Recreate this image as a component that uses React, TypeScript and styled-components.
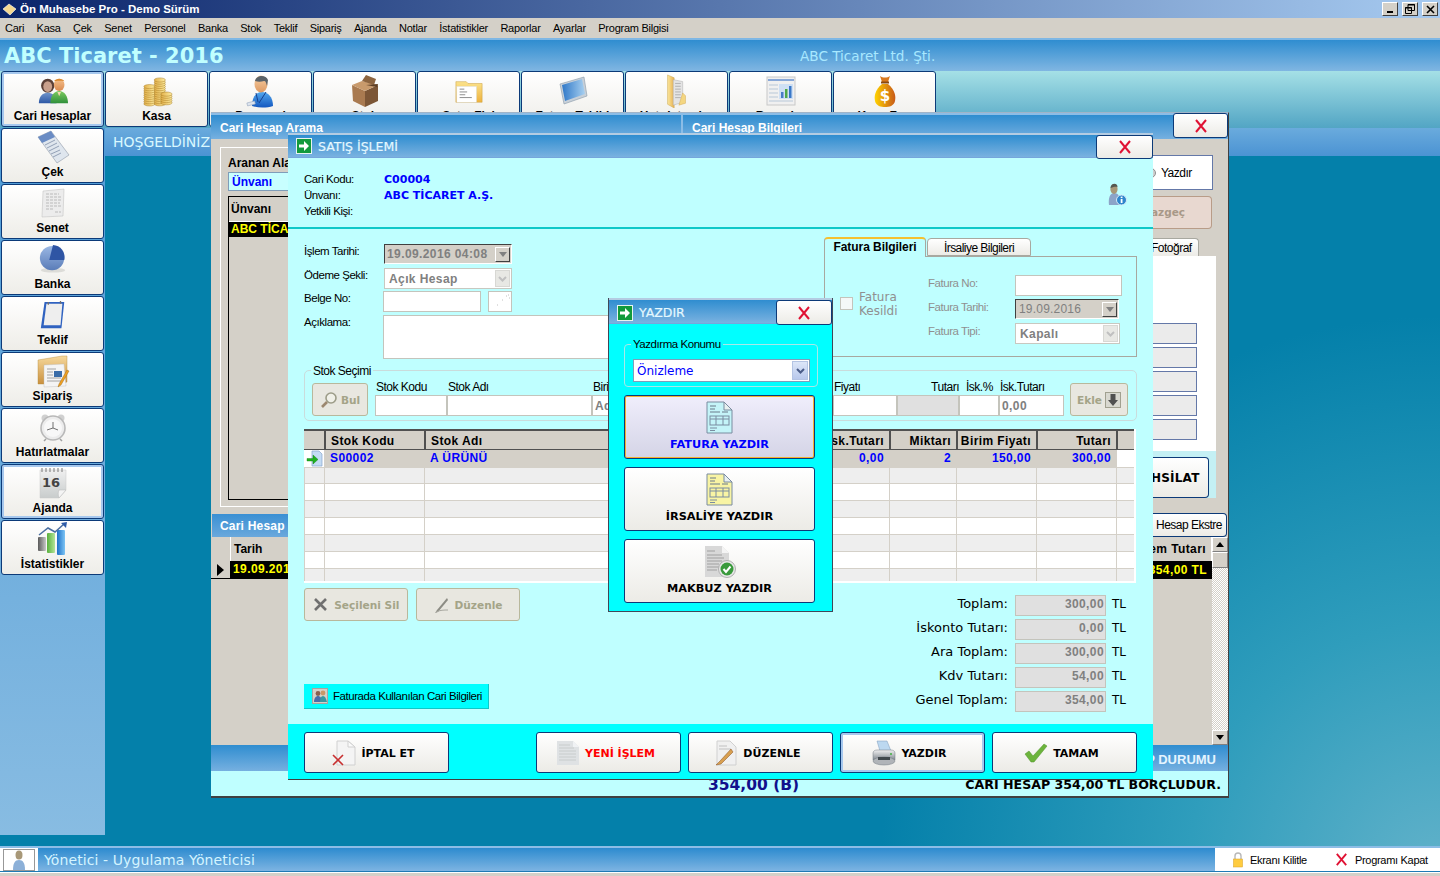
import React from "react";
import styled, { createGlobalStyle, css } from "styled-components";

const ui = `"Liberation Sans", Arial, sans-serif`;
const wide = `"DejaVu Sans", Verdana, sans-serif`;
const boldData = css`
  font: bold 12px ${ui};
  letter-spacing: 0.4px;
`;

const Global = createGlobalStyle`
  html, body { margin: 0; padding: 0; background: #0480aa; }
  * { box-sizing: border-box; }
`;

const Root = styled.div`
  position: relative;
  width: 1440px;
  height: 876px;
  overflow: hidden;
  display: flex;
  flex-direction: column;
  font-family: ${ui};
  font-size: 11px;
  color: #000;
  background: radial-gradient(circle 560px at 100% 100%, #62b2ca 0%, #2f9dbc 45%, #0480aa 100%), #0480aa;
`;

/* ---------- application chrome ---------- */
const TitleBar = styled.div`
  height: 18px;
  display: flex;
  align-items: center;
  gap: 3px;
  padding: 0 2px 0 2px;
  background: linear-gradient(90deg, #0a246a 0%, #a6caf0 100%);
  color: #fff;
  font: bold 11.5px ${ui};
`;
const TitleText = styled.span`
  flex: 1;
  white-space: nowrap;
`;
const WinButton = styled.div`
  width: 16px;
  height: 14px;
  background: #d4d0c8;
  border: 1px solid;
  border-color: #fff #404040 #404040 #fff;
  display: flex;
  align-items: center;
  justify-content: center;
  margin-left: 1px;
`;
const MenuBar = styled.div`
  height: 20px;
  display: flex;
  align-items: center;
  gap: 12.4px;
  padding-left: 5px;
  background: #d4d0c8;
  font: 11px ${ui};
  letter-spacing: -0.25px;
  white-space: nowrap;
`;
const Header = styled.div`
  height: 33px;
  flex: none;
  display: flex;
  align-items: center;
  border-top: 2px solid #7fb7e4;
  padding-left: 4px;
  background: linear-gradient(180deg, #2f8dd0 0%, #80b6e2 100%);
`;
const Brand = styled.div`
  width: 796px;
  font: bold 21px ${wide};
  color: #c0ffff;
  white-space: nowrap;
`;
const Company = styled.div`
  font: 13.6px ${wide};
  color: #a8e8ff;
`;
const TopTools = styled.div`
  height: 57px;
  flex: none;
  display: flex;
  gap: 1px;
  padding-left: 1px;
  background: linear-gradient(180deg, #a5e0e6 0%, #52a5c4 100%);
`;
const ToolButton = styled.div<{ $active?: boolean }>`
  width: 103px;
  height: 56px;
  display: flex;
  flex-direction: column;
  align-items: center;
  justify-content: flex-start;
  background: linear-gradient(180deg, #ffffff 0%, #eeede8 100%);
  border: 1px solid #0c3a78;
  border-radius: 3px;
  box-shadow: ${(p) => (p.$active ? "inset 0 0 0 2px #a6c8ee" : "none")};
  font: bold 12px ${ui};
  white-space: nowrap;
  overflow: hidden;
`;
const ToolIcon = styled.div`
  height: 37px;
  flex: none;
  display: flex;
  align-items: center;
  justify-content: center;
`;
const Workspace = styled.div`
  flex: 1;
  display: flex;
  min-height: 0;
`;
const Sidebar = styled.div`
  width: 105px;
  height: 707px;
  flex: none;
  display: flex;
  flex-direction: column;
  gap: 1px;
  padding-left: 1px;
  background: linear-gradient(180deg, #4f9bd6 0%, #88bce2 100%);
`;
const SideButton = styled(ToolButton)`
  height: 55px;
  ${ToolIcon} {
    height: 36px;
  }
`;
const Stage = styled.div`
  flex: 1;
`;
const Welcome = styled.div`
  height: 28px;
  padding-left: 8px;
  display: flex;
  align-items: center;
  background: linear-gradient(180deg, #6aabdd 0%, #4b93d3 100%);
  color: #d8f8ff;
  font: 14px ${wide};
`;
const StatusBar = styled.div`
  height: 26px;
  flex: none;
  display: flex;
  align-items: stretch;
  border-top: 2px solid #8cbde6;
  border-bottom: 1px solid #1f7ab4;
`;
const StatusAvatar = styled.div`
  width: 38px;
  background: #fff;
  display: flex;
  align-items: center;
  justify-content: center;
`;
const StatusUser = styled.div`
  flex: 1;
  display: flex;
  align-items: center;
  padding-left: 6px;
  background: linear-gradient(180deg, #2d8bcf 0%, #7db4e2 100%);
  color: #d4f4ff;
  font: 14px ${wide};
  letter-spacing: 0.1px;
`;
const StatusActions = styled.div`
  width: 225px;
  background: #fff;
  display: flex;
  align-items: center;
  gap: 27px;
  padding-left: 17px;
  font: 11px ${ui};
  letter-spacing: -0.3px;
`;
const StatusAction = styled.span`
  display: flex;
  align-items: center;
  gap: 6px;
  white-space: nowrap;
`;
const Footer = styled.div`
  height: 4px;
  flex: none;
  background: linear-gradient(180deg, #fff 0 1px, #d4d0c8 1px);
`;

/* ---------- back window ---------- */
const BackWindow = styled.div`
  position: absolute;
  left: 211px;
  top: 112px;
  width: 1018px;
  height: 686px;
  display: flex;
  flex-direction: column;
  background: #d4d0c8;
  border-top: 1px solid #a0b4c8;
  border-right: 1px solid #404040;
  border-bottom: 2px solid #404040;
`;
const BackTitle = styled.div`
  height: 26px;
  flex: none;
  display: flex;
  background: linear-gradient(180deg, #2f8dd0 0%, #76b0e0 100%);
  border-top: 2px solid #8cbde6;
  color: #fff;
  font: bold 12px ${ui};
`;
const BackTitleCell = styled.div<{ $w?: number }>`
  width: ${(p) => p.$w ?? 0}px;
  flex: ${(p) => (p.$w ? "none" : 1)};
  padding: 6px 0 0 9px;
  border-right: ${(p) => (p.$w ? "2px solid #8cbde6" : "none")};
  white-space: nowrap;
`;
const CloseButton = styled.div<{ $w: number; $h: number }>`
  position: absolute;
  right: 0;
  top: 0;
  width: ${(p) => p.$w}px;
  height: ${(p) => p.$h}px;
  background: linear-gradient(180deg, #fff 0%, #ecebe6 100%);
  border: 1px solid #0c3a78;
  border-radius: 3px;
  display: flex;
  align-items: center;
  justify-content: center;
`;
const BackBody = styled.div`
  height: 606px;
  flex: none;
  display: flex;
  justify-content: space-between;
`;
const Pane = styled.div`
  width: 77px;
  flex: none;
  overflow: hidden;
  display: flex;
  flex-direction: column;
`;
const SearchFrame = styled.div`
  height: 360px;
  margin: 8px 0 0 9px;
  width: 90px;
  flex: none;
  padding: 8px 0 0 7px;
  border: 1px solid #fff;
  border-right: 0;
`;
const SearchLabel = styled.div`
  font: bold 12px ${ui};
  white-space: nowrap;
  height: 13px;
`;
const SearchField = styled.div`
  margin-top: 3px;
  height: 19px;
  width: 90px;
  background: #c8ffff;
  border: 1px solid #7f9db9;
  padding: 2px 3px;
  font: bold 12px ${ui};
  color: #0000ff;
`;
const SearchList = styled.div`
  margin-top: 5px;
  height: 304px;
  width: 90px;
  border: 1px solid #000;
`;
const SearchHead = styled.div`
  height: 25px;
  padding: 5px 2px;
  font: bold 12px ${ui};
  border-bottom: 1px solid #fff;
`;
const SearchRow = styled.div`
  height: 15px;
  background: #000;
  color: #ff0;
  padding-left: 2px;
  font: bold 12px ${ui};
  white-space: nowrap;
`;
const HistoryBand = styled.div`
  margin: 7px 0 0 1px;
  height: 23px;
  flex: none;
  padding: 5px 0 0 8px;
  background: linear-gradient(180deg, #3a90d4 0%, #6aa8dc 100%);
  color: #fff;
  font: bold 12px ${ui};
  letter-spacing: 0.2px;
  white-space: nowrap;
  overflow: hidden;
`;
const HistoryHead = styled.div`
  height: 24px;
  flex: none;
  display: flex;
  align-items: center;
  margin-left: 19px;
  padding-left: 3px;
  border-left: 1px solid #fff;
  font: bold 12px ${ui};
`;
const HistoryRow = styled.div`
  height: 18px;
  flex: none;
  display: flex;
  ${boldData};
`;
const RowMark = styled.div`
  width: 20px;
  flex: none;
  display: flex;
  align-items: center;
  justify-content: center;
  border: 1px solid #000;
  border-width: 0 1px 1px 0;
`;
const BlackCell = styled.div`
  flex: 1;
  background: #000;
  color: #ff0;
  padding-left: 2px;
  white-space: nowrap;
  overflow: hidden;
  line-height: 16px;
`;
const PrintLink = styled.div`
  margin: 16px 15px 0 0;
  height: 35px;
  flex: none;
  background: #fff;
  border: 1px solid #6478a8;
  border-left: 0;
  display: flex;
  align-items: center;
  gap: 4px;
  font: 12px ${ui};
  letter-spacing: -0.5px;
`;
const CancelButton = styled.div`
  margin: 6px 16px 0 0;
  height: 33px;
  flex: none;
  padding-top: 9px;
  background: #e8d8d0;
  border: 1px solid #b89c88;
  border-left: 0;
  border-radius: 0 4px 4px 0;
  font: bold 10.5px ${wide};
  color: #a89888;
`;
const PhotoTab = styled.div`
  margin-top: 9px;
  width: 48px;
  height: 18px;
  flex: none;
  background: linear-gradient(180deg, #fff, #ecebe6);
  border: 1px solid #a8a8a0;
  border-left: 0;
  border-bottom: 0;
  border-radius: 0 4px 0 0;
  font: 12px ${ui};
  letter-spacing: -0.5px;
  padding-top: 2px;
`;
const PhotoPanel = styled.div`
  width: 65px;
  height: 195px;
  flex: none;
  background: #fff;
  padding-top: 67px;
  display: flex;
  flex-direction: column;
  gap: 3px;
`;
const PhotoRow = styled.div`
  width: 46px;
  height: 21px;
  flex: none;
  background: #ebebeb;
  border: 1px solid #6478a8;
  border-left: 0;
`;
const CollectArea = styled.div`
  width: 65px;
  height: 47px;
  flex: none;
  padding-top: 6px;
  background: #c4f0f4;
`;
const CollectButton = styled.div`
  width: 58px;
  height: 41px;
  display: flex;
  align-items: center;
  background: linear-gradient(180deg, #fff, #ecebe6);
  border: 1px solid #0c3a78;
  border-left: 0;
  border-radius: 0 4px 4px 0;
  font: bold 12px ${wide};
  white-space: nowrap;
  letter-spacing: 0.2px;
`;
const StatementButton = styled.div`
  margin: 15px 0 0 0;
  width: 76px;
  height: 24px;
  flex: none;
  background: linear-gradient(180deg, #fff, #ecebe6);
  border: 1px solid #0c3a78;
  border-left: 0;
  border-radius: 0 4px 4px 0;
  display: flex;
  align-items: center;
  padding-left: 5px;
  font: 12px ${ui};
  letter-spacing: -0.5px;
  white-space: nowrap;
`;
const GridWrap = styled.div`
  flex: 1;
  display: flex;
`;
const AmountCol = styled.div`
  width: 61px;
  flex: none;
`;
const AmountHead = styled.div`
  height: 24px;
  display: flex;
  align-items: center;
  justify-content: flex-end;
  padding-right: 5px;
  border-right: 1px solid #fff;
  ${boldData};
  white-space: nowrap;
  overflow: hidden;
`;
const AmountCell = styled.div`
  height: 18px;
  display: flex;
  align-items: center;
  justify-content: flex-end;
  padding-right: 5px;
  background: #000;
  color: #ff0;
  ${boldData};
  white-space: nowrap;
  overflow: hidden;
`;
const ScrollBar = styled.div`
  width: 16px;
  flex: none;
  display: flex;
  flex-direction: column;
  background: repeating-conic-gradient(#fff 0 25%, #d4d0c8 0 50%) 0 0 / 2px 2px;
`;
const ScrollBtn = styled.div<{ $grow?: boolean }>`
  height: ${(p) => (p.$grow ? 16 : 15)}px;
  background: #d4d0c8;
  border: 1px solid;
  border-color: #fff #808080 #808080 #fff;
  display: flex;
  align-items: center;
  justify-content: center;
  flex: none;
`;
const ScrollTrack = styled.div`
  flex: 1;
`;
const BackBand = styled.div`
  height: 26px;
  flex: none;
  padding: 3px 12px 0 0;
  display: flex;
  align-items: center;
  justify-content: flex-end;
  background: linear-gradient(180deg, #2f8dd0 0%, #76b0e0 100%);
  color: #e4f4ff;
  font: bold 13px ${ui};
`;
const BackFoot = styled.div`
  flex: 1;
  display: flex;
  align-items: center;
  justify-content: space-between;
  padding: 2px 7px 0 497px;
  background: #bfffff;
  font: bold 12.6px ${wide};
`;
const Owed = styled.span`
  color: #10108c;
  font: bold 15.5px ${wide};
`;

/* ---------- sale dialog ---------- */
const SaleDialog = styled.div`
  position: absolute;
  left: 288px;
  top: 133px;
  width: 865px;
  height: 647px;
  display: flex;
  flex-direction: column;
  background: #bfffff;
  border-bottom: 1px solid #404040;
`;
const DialogTitle = styled.div<{ $h: number; $pad?: number }>`
  position: relative;
  height: ${(p) => p.$h}px;
  flex: none;
  display: flex;
  align-items: center;
  gap: 6px;
  padding: ${(p) => p.$pad ?? 0}px 0 0 8px;
  border-top: 2px solid #b4cce2;
  border-bottom: 1px solid #76a6dc;
  background: linear-gradient(180deg, #2f8dd0 0%, #7ab2e0 100%);
  color: #e4f8ff;
  font: 12.5px ${wide};
  -webkit-text-stroke: 0.2px #e4f8ff;
`;
const InfoBlock = styled.div`
  position: relative;
  height: 71px;
  flex: none;
  padding: 13px 16px 0;
  border-bottom: 2px solid #10c8c8;
  display: grid;
  grid-template-columns: 80px 1fr;
  grid-auto-rows: 16px;
  align-items: center;
`;
const CondLabel = styled.span`
  font: 11.5px ${ui};
  letter-spacing: -0.45px;
  white-space: nowrap;
`;
const BlueValue = styled.span`
  font: bold 11px ${wide};
  color: #0000ff;
`;
const InfoIcon = styled.div`
  position: absolute;
  right: 24px;
  top: 24px;
`;
const FormArea = styled.div`
  height: 133px;
  flex: none;
  display: flex;
`;
const FormFields = styled.div`
  width: 536px;
  flex: none;
  padding: 15px 0 0 16px;
  display: flex;
  flex-direction: column;
`;
const FormRow = styled.div<{ $h: number }>`
  display: flex;
  height: ${(p) => p.$h}px;
  flex: none;
  gap: 6px;
`;
const FormLabel = styled(CondLabel)`
  width: 74px;
  padding-top: 1px;
  flex: none;
`;
const DateBox = styled.div<{ $w: number }>`
  width: ${(p) => p.$w}px;
  height: 20px;
  display: flex;
  align-items: center;
  justify-content: space-between;
  padding: 0 1px 0 2px;
  background: #d4d0c8;
  border: 1px solid;
  border-color: #404040 #fff #fff #404040;
  color: #808080;
  ${boldData};
  white-space: nowrap;
`;
const PlainDate = styled.span`
  font: 12px ${ui};
  letter-spacing: 0.2px;
  padding-left: 1px;
`;
const SpinBtn = styled.div`
  width: 15px;
  height: 15px;
  flex: none;
  background: #d4d0c8;
  border: 1px solid;
  border-color: #fff #404040 #404040 #fff;
  display: flex;
  align-items: center;
  justify-content: center;
`;
const ComboBox = styled.div<{ $w: number }>`
  width: ${(p) => p.$w}px;
  height: 21px;
  display: flex;
  align-items: center;
  justify-content: space-between;
  padding: 0 1px 0 4px;
  background: #fff;
  border: 1px solid #c8c8c0;
  color: #808080;
  ${boldData};
`;
const ComboArrow = styled.div`
  width: 15px;
  height: 17px;
  background: #e8e8e4;
  border: 1px solid #d8d8d4;
  display: flex;
  align-items: center;
  justify-content: center;
  flex: none;
`;
const TextBox = styled.div<{ $w: number; $h: number; $fill?: string; $shift?: number }>`
  width: ${(p) => p.$w}px;
  height: ${(p) => p.$h}px;
  flex: none;
  margin-left: ${(p) => p.$shift ?? 0}px;
  background: ${(p) => p.$fill ?? "#fff"};
  border: 1px solid #c4c4bc;
  display: flex;
  align-items: center;
  justify-content: center;
`;
const TabsArea = styled.div`
  flex: none;
  padding-top: 8px;
  width: 313px;
`;
const TabStrip = styled.div`
  height: 19px;
  display: flex;
  align-items: flex-end;
  gap: 1px;
`;
const Tab = styled.div<{ $active?: boolean }>`
  width: ${(p) => (p.$active ? 102 : 104)}px;
  height: ${(p) => (p.$active ? 20 : 18)}px;
  margin-bottom: ${(p) => (p.$active ? -1 : 0)}px;
  position: relative;
  text-align: center;
  padding-top: ${(p) => (p.$active ? 1 : 2)}px;
  border: 1px solid #a8a8a0;
  border-bottom: ${(p) => (p.$active ? "0" : "1px solid #a8a8a0")};
  border-top: ${(p) => (p.$active ? "2px solid #f4c030" : "1px solid #a8a8a0")};
  border-radius: 4px 4px 0 0;
  background: ${(p) => (p.$active ? "#bfffff" : "linear-gradient(180deg, #fff, #ecebe6)")};
  font: ${(p) => (p.$active ? "bold 12px" : "12px")} ${ui};
  letter-spacing: ${(p) => (p.$active ? -0.05 : -0.55)}px;
  white-space: nowrap;
`;
const TabPanel = styled.div`
  height: 101px;
  display: flex;
  border: 1px solid #a8a8a0;
  padding: 18px 14px 0 15px;
`;
const CheckCol = styled.div`
  width: 88px;
  height: 43px;
  flex: none;
  display: flex;
  align-items: flex-end;
  gap: 6px;
`;
const CheckBox = styled.div`
  width: 13px;
  height: 13px;
  margin-bottom: 8px;
  flex: none;
  background: #f4f8f8;
  border: 1px solid #c4c4bc;
`;
const CheckLabel = styled.div`
  font: 12px/14px ${wide};
  color: #909090;
`;
const InvoiceFields = styled.div`
  flex: 1;
  display: grid;
  grid-template-columns: 87px 1fr;
  grid-auto-rows: 24px;
  align-items: start;
`;
const MutedLabel = styled(CondLabel)`
  color: #909090;
  padding-top: 2px;
`;
const StockGroup = styled.div`
  position: relative;
  margin: 8px 16px 0;
  height: 51px;
  flex: none;
  display: flex;
  align-items: flex-start;
  padding: 12px 8px 0 7px;
  border: 1px solid #cadcdc;
  border-radius: 5px;
`;
const Legend = styled.span`
  position: absolute;
  left: 6px;
  top: -7px;
  padding: 0 2px;
  background: #bfffff;
  font: 12px ${ui};
  letter-spacing: -0.5px;
`;
const ActionButton = styled.div<{ $w: number; $h: number }>`
  width: ${(p) => p.$w}px;
  height: ${(p) => p.$h}px;
  flex: none;
  display: flex;
  align-items: center;
  justify-content: center;
  gap: 3px;
  background: #e8e7e0;
  border: 1px solid #b8b89c;
  border-radius: 3px;
  color: #a4a488;
  font: bold 10.6px ${wide};
`;
const StockFields = styled.div`
  margin: -1px 0 0 7px;
  display: flex;
  flex: none;
`;
const StockField = styled.div<{ $w: number }>`
  width: ${(p) => p.$w}px;
  flex: none;
  display: flex;
  flex-direction: column;
`;
const StockLabel = styled.div<{ $right?: boolean; $indent?: number }>`
  height: 13px;
  padding-left: ${(p) => p.$indent ?? 1}px;
  text-align: ${(p) => (p.$right ? "right" : "left")};
  font: 12px/11px ${ui};
  letter-spacing: -0.5px;
  white-space: nowrap;
`;
const StockInput = styled.div<{ $fill?: string }>`
  height: 21px;
  background: ${(p) => p.$fill ?? "#fff"};
  border: 1px solid #c4c4bc;
  padding: 3px 2px;
  ${boldData};
  color: #808080;
  white-space: nowrap;
  overflow: hidden;
`;
const EkleButton = styled(ActionButton)`
  margin-left: 6px;
`;
const GRID = "20px 100px 405px 60px 67px 80px 80px 20px";
const LineGrid = styled.div`
  margin: 8px 16px 0;
  width: 832px;
  height: 154px;
  flex: none;
  overflow: hidden;
  background: #fff;
  border-right: 2px solid #fff;
  border-bottom: 2px solid #fff;
`;
const GridHead = styled.div`
  height: 21px;
  display: grid;
  grid-template-columns: ${GRID};
  background: #d4d0c8;
  border-top: 2px solid #505050;
  border-bottom: 1px solid #505050;
`;
const HeadCell = styled.div<{ $right?: boolean; $first?: boolean }>`
  border-left: ${(p) => (p.$first ? "0" : "2px solid #505050")};
  padding: 3px 5px 0;
  text-align: ${(p) => (p.$right ? "right" : "left")};
  ${boldData};
  white-space: nowrap;
  overflow: hidden;
  direction: ${(p) => (p.$right ? "rtl" : "ltr")};
`;
const GridRow = styled.div<{ $tone: string }>`
  height: 17px;
  display: grid;
  grid-template-columns: ${GRID};
  background: ${(p) => p.$tone};
`;
const GridCell = styled.div<{ $right?: boolean; $fill?: string }>`
  border-left: 1px solid #d4d0c8;
  border-bottom: 1px solid #d4d0c8;
  padding: 0 5px;
  text-align: ${(p) => (p.$right ? "right" : "left")};
  ${boldData};
  line-height: 16px;
  color: #0000ff;
  white-space: nowrap;
  overflow: hidden;
  ${(p) => (p.$fill ? `background: ${p.$fill};` : "")}
`;
const RowIconCell = styled.div`
  background: #fff;
  display: flex;
  align-items: center;
  justify-content: center;
  border-bottom: 1px solid #d4d0c8;
`;
const Lower = styled.div`
  flex: 1;
  display: flex;
  justify-content: space-between;
  padding: 5px 13px 0 16px;
`;
const LowerLeft = styled.div`
  display: flex;
  flex-direction: column;
`;
const ButtonRow = styled.div`
  display: flex;
  gap: 8px;
`;
const CariInfo = styled.div`
  margin-top: 63px;
  width: 185px;
  height: 25px;
  display: flex;
  align-items: center;
  gap: 5px;
  padding-left: 8px;
  background: #00ffff;
  border-right: 1px solid #10c8c8;
  border-bottom: 1px solid #10c8c8;
  font: 11.5px ${ui};
  letter-spacing: -0.45px;
  white-space: nowrap;
`;
const Totals = styled.div`
  padding-top: 7px;
  display: grid;
  grid-template-columns: 1fr 91px 27px;
  grid-auto-rows: 24px;
  column-gap: 7px;
  width: 340px;
`;
const TotalLabel = styled.div`
  text-align: right;
  font: 13px/18px ${wide};
  white-space: nowrap;
`;
const TotalValue = styled.div`
  height: 21px;
  text-align: right;
  padding-right: 1px;
  background: #e0e0e0;
  border: 1px solid #c4c4bc;
  color: #808080;
  ${boldData};
  line-height: 17px;
`;
const TotalUnit = styled.div`
  font: 12px/18px ${wide};
  margin-left: -1px;
`;
const BottomBand = styled.div`
  height: 55px;
  flex: none;
  display: flex;
  gap: 7px;
  padding: 8px 16px 0;
  background: #00ffff;
`;
const BandButton = styled.div<{ $active?: boolean; $gapLeft?: number }>`
  width: 145px;
  height: 41px;
  margin-left: ${(p) => p.$gapLeft ?? 0}px;
  display: flex;
  align-items: center;
  justify-content: center;
  gap: 5px;
  padding: 1px 6px 0 0;
  background: linear-gradient(180deg, #fff 0%, #ecebe6 100%);
  border: 1px solid #0c3a78;
  border-radius: 3px;
  box-shadow: ${(p) => (p.$active ? "inset 0 0 0 2px #a6c8ee" : "none")};
  font: bold 11px ${wide};
  white-space: nowrap;
`;
const RedText = styled.span`
  color: #ff0000;
`;

/* ---------- print dialog ---------- */
const PrintDialog = styled.div`
  position: absolute;
  left: 608px;
  top: 298px;
  width: 225px;
  height: 314px;
  display: flex;
  flex-direction: column;
  background: #00ffff;
  border: 1px solid #404858;
  border-top: 0;
`;
const PrintBody = styled.div`
  flex: 1;
  padding: 20px 15px 0;
  display: flex;
  flex-direction: column;
  gap: 8px;
`;
const LocationGroup = styled.div`
  position: relative;
  width: 194px;
  height: 43px;
  flex: none;
  padding: 14px 8px 0 8px;
  border: 1px solid #a8e8e8;
  border-radius: 4px;
`;
const LocationLegend = styled(Legend)`
  background: #00ffff;
  left: 6px;
  font-size: 11.5px;
  letter-spacing: -0.45px;
`;
const LocationCombo = styled.div`
  width: 177px;
  height: 23px;
  display: flex;
  align-items: center;
  justify-content: space-between;
  padding: 0 1px 0 3px;
  background: #fff;
  border: 1px solid #7f9db9;
  color: #0000ff;
  font: 12px ${wide};
`;
const LocationArrow = styled.div`
  width: 16px;
  height: 19px;
  background: linear-gradient(180deg, #dce6f8, #b8c8ec);
  border: 1px solid #b4c4e4;
  display: flex;
  align-items: center;
  justify-content: center;
`;
const PrintButton = styled.div<{ $active?: boolean }>`
  width: 191px;
  height: 64px;
  flex: none;
  display: flex;
  flex-direction: column;
  align-items: center;
  padding-top: 5px;
  gap: 4px;
  background: ${(p) =>
    p.$active
      ? "linear-gradient(180deg, #f0eefc 0%, #d4d4e6 100%)"
      : "linear-gradient(180deg, #fff 0%, #ecebe6 100%)"};
  border: 1px solid #0c3a78;
  border-radius: 3px;
  box-shadow: ${(p) => (p.$active ? "inset 0 0 0 1px #f4b030" : "none")};
  color: ${(p) => (p.$active ? "#0000ff" : "#000")};
  font: bold 11.3px ${wide};
`;

/* ---------- icons ---------- */
type IconProps = { s?: number };

const Grad = ({ id, a, b, h }: { id: string; a: string; b: string; h?: boolean }) => (
  <linearGradient id={id} x1="0" y1="0" x2={h ? "1" : "0"} y2={h ? "0" : "1"}>
    <stop offset="0" stopColor={a} />
    <stop offset="1" stopColor={b} />
  </linearGradient>
);

const PeopleIcon = ({ s = 30 }: IconProps) => (
  <svg width={s} height={s} viewBox="0 0 34 34">
    <defs>
      <Grad id="pg1" a="#6f93c9" b="#2c57a5" />
      <Grad id="pg2" a="#7ccb5f" b="#2f8f3a" />
      <Grad id="pg3" a="#f6c18c" b="#d98a50" />
    </defs>
    <ellipse cx="11" cy="11" rx="7.5" ry="8" fill="#5b4037" />
    <ellipse cx="11" cy="12" rx="5" ry="6" fill="#c9a08c" />
    <path d="M1 31c0-8 4-12 10-12s10 4 10 12z" fill="url(#pg1)" />
    <ellipse cx="24" cy="10" rx="6" ry="7" fill="url(#pg3)" />
    <path d="M18 6c2-4 10-4 12 0-3-1-9-1-12 0z" fill="#d9882f" />
    <path d="M14 31c0-8 4-14 10-14s10 6 10 14z" fill="url(#pg2)" />
    <path d="M22 18l2 5 2-5z" fill="#f6d8b0" />
  </svg>
);
const CoinsIcon = ({ s = 32 }: IconProps) => {
  const stacks = [
    { x: 9, top: 10, n: 9 },
    { x: 20, top: 3, n: 12 },
    { x: 27, top: 18, n: 5 },
  ];
  return (
    <svg width={s} height={s} viewBox="0 0 34 34">
      <defs>
        <Grad id="cg" a="#e2b04a" b="#fdeca0" h />
      </defs>
      {stacks.map((st) =>
        Array.from({ length: st.n }).map((_, i) => (
          <ellipse
            key={`${st.x}-${i}`}
            cx={st.x}
            cy={st.top + st.n * 2.3 - i * 2.3}
            rx="6"
            ry="2.2"
            fill="url(#cg)"
            stroke="#a87a20"
            strokeWidth="0.5"
          />
        ))
      )}
    </svg>
  );
};
const ManIcon = ({ s = 36 }: IconProps) => (
  <svg width={s} height={s} viewBox="0 0 36 36">
    <defs>
      <Grad id="mg1" a="#52a8ee" b="#1458c0" />
      <Grad id="mg2" a="#f8cfa4" b="#dd9a62" />
    </defs>
    <path d="M9 33c0-9 4-14 10-14s11 5 11 14c-6 2-15 2-21 0z" fill="url(#mg1)" />
    <ellipse cx="18" cy="11" rx="6.5" ry="8.5" fill="url(#mg2)" />
    <path d="M12 8c1-6 11-7 13-1l-1 6c-1-3-1-5-3-5-3 1-6 1-9 0z" fill="#5a6268" />
    <path d="M13 20l2 9M23 19l-7 11" stroke="#144090" strokeWidth="1" fill="none" />
    <rect x="4" y="29" width="8" height="3" fill="#dde4ee" stroke="#90a0b8" strokeWidth="0.5" transform="rotate(-14 8 30)" />
  </svg>
);
const BoxIcon = ({ s = 34 }: IconProps) => (
  <svg width={s} height={s} viewBox="0 0 34 34">
    <path d="M4 11l13 6v16L5 27z" fill="#a97a50" />
    <path d="M17 17l13-6v16l-13 6z" fill="#7c5636" />
    <path d="M4 11l10-4 16 4-13 6z" fill="#c89a6c" />
    <path d="M14 7l4-6 10 4-2 6z" fill="#8d6540" />
    <path d="M18 11l12-1-1 3z" fill="#5d3f26" />
  </svg>
);
const FolderDocIcon = ({ s = 30 }: IconProps) => (
  <svg width={s} height={s} viewBox="0 0 32 32">
    <defs>
      <Grad id="fd" a="#fbe38c" b="#eeb23e" />
    </defs>
    <path d="M2 6h11l2 2h15v20H2z" fill="url(#fd)" stroke="#c89a3a" strokeWidth="0.5" />
    <rect x="3" y="11" width="21" height="17" fill="#fff" stroke="#d8d8d0" strokeWidth="0.5" />
    <path d="M6 14h5M6 17h8M6 20h6M6 23h13" stroke="#888" strokeWidth="1" />
  </svg>
);
const TabletIcon = ({ s = 32 }: IconProps) => (
  <svg width={s} height={s} viewBox="0 0 32 32">
    <defs>
      <Grad id="tg" a="#2f78c8" b="#a8d0f0" h />
    </defs>
    <path d="M3 9L27 2l3 19-23 8z" fill="#c8d0d8" stroke="#8898a8" strokeWidth="0.6" />
    <path d="M5 10l20-6 3 15-20 7z" fill="url(#tg)" />
  </svg>
);
const TallFolderIcon = ({ s = 34 }: IconProps) => (
  <svg width={s} height={s} viewBox="0 0 36 36">
    <defs>
      <Grad id="tf" a="#fbe79c" b="#e7b050" h />
    </defs>
    <path d="M8 1l7 3v32l-7-4z" fill="url(#tf)" stroke="#caa24c" strokeWidth="0.5" />
    <path d="M14 6l10 2v22l-10 3z" fill="#e4e4e4" stroke="#aaa" strokeWidth="0.5" />
    <path d="M16 10h6M16 13h6M16 16h6M16 19h6M16 22h6M16 25h6" stroke="#999" strokeWidth="0.7" />
    <path d="M24 20l3 3v8l-7 2z" fill="#f4d680" stroke="#c89a3a" strokeWidth="0.4" />
  </svg>
);
const ChartSheetIcon = ({ s = 32 }: IconProps) => (
  <svg width={s} height={s} viewBox="0 0 32 32">
    <rect x="2" y="2" width="28" height="28" fill="#f0f0f0" stroke="#c8c8c8" />
    <rect x="3" y="4" width="26" height="2" fill="#88a8d8" />
    <path d="M4 10h9M4 14h9M4 18h9M4 22h9M4 26h24" stroke="#b8c8d8" strokeWidth="1" />
    <rect x="14" y="9" width="14" height="15" fill="#cfe0f4" />
    <rect x="16" y="17" width="2.5" height="6" fill="#4a7cc8" />
    <rect x="20" y="14" width="2.5" height="9" fill="#50a848" />
    <rect x="24" y="11" width="2.5" height="12" fill="#3a78c8" />
  </svg>
);
const BagIcon = ({ s = 34 }: IconProps) => (
  <svg width={s} height={s} viewBox="0 0 34 34">
    <defs>
      <Grad id="bg" a="#ffd200" b="#c85a18" h />
    </defs>
    <path d="M12 2c3 2 7 2 10 0l-2 6h-6z" fill="#d8781e" />
    <rect x="13" y="7.5" width="8" height="2" fill="#8a4a10" />
    <path d="M14 10c-7 6-8 12-7 17 1 5 6 6 10 6s9-1 10-6c1-5 0-11-7-17z" fill="url(#bg)" />
    <text x="17" y="27" textAnchor="middle" fontFamily="DejaVu Sans" fontSize="15" fontWeight="700" fill="#fff">$</text>
  </svg>
);
const NoteIcon = ({ s = 34 }: IconProps) => (
  <svg width={s} height={s} viewBox="0 0 34 34">
    <path d="M2 7l13-6 18 24-12 8z" fill="#dfe6ee" stroke="#8e98a8" strokeWidth="0.6" />
    <path d="M2 7l13-6 4 6-13 6z" fill="#6a8cc4" />
    <path d="M9 15l10-5M11 18l10-5M13 21l10-5M15 24l9-4M17 27l8-4" stroke="#8a98b0" strokeWidth="0.9" />
  </svg>
);
const PaperIcon = ({ s = 30 }: IconProps) => (
  <svg width={s} height={s} viewBox="0 0 30 30">
    <path d="M5 3l21-2 -1 27-21 1z" fill="#ececec" stroke="#bcbcbc" strokeWidth="0.5" />
    <path d="M8 6h13M8 9h15M8 12h15M8 15h14M8 18h15M8 21h8M17 24h6" stroke="#a8a8a8" strokeWidth="0.7" strokeDasharray="3 1" />
  </svg>
);
const PieIcon = ({ s = 30 }: IconProps) => (
  <svg width={s} height={s} viewBox="0 0 32 32">
    <defs>
      <Grad id="pi" a="#9bb8e4" b="#5a7cb8" />
    </defs>
    <ellipse cx="16" cy="28" rx="13" ry="2.5" fill="#dcdcd8" />
    <circle cx="15" cy="15" r="13" fill="url(#pi)" />
    <path d="M16 1a13 13 0 0 1 12 16H12z" fill="#2f55a4" />
  </svg>
);
const PageIcon = ({ s = 30 }: IconProps) => (
  <svg width={s} height={s} viewBox="0 0 32 32">
    <path d="M7 2h21l-3 28H3z" fill="#2f62c0" />
    <path d="M9 4h17l-2 23H6z" fill="#eeeeee" />
    <path d="M11 2v3M24 1v3" stroke="#707070" strokeWidth="1.4" />
  </svg>
);
const OrderIcon = ({ s = 34 }: IconProps) => (
  <svg width={s} height={s} viewBox="0 0 34 34">
    <defs>
      <Grad id="og" a="#f6d89c" b="#c9903e" />
    </defs>
    <path d="M2 6l24-4h5v26l-6 2H2z" fill="url(#og)" stroke="#b48838" strokeWidth="0.4" />
    <path d="M8 11l20-1 2 22-22 1z" fill="#f4f4f4" stroke="#bcbcbc" strokeWidth="0.4" />
    <path d="M11 15h9M11 18h6M11 21h6M11 24h14M11 27h14" stroke="#909090" strokeWidth="0.8" />
    <rect x="18" y="17" width="8" height="6" fill="#3a6ca8" />
    <path d="M31 16l-8 14-1 3 3-2 8-14z" fill="#f0a020" stroke="#906010" strokeWidth="0.4" />
  </svg>
);
const ClockIcon = ({ s = 30 }: IconProps) => (
  <svg width={s} height={s} viewBox="0 0 30 30">
    <circle cx="7" cy="6" r="3.5" fill="#d0d0d0" />
    <circle cx="23" cy="6" r="3.5" fill="#d0d0d0" />
    <circle cx="15" cy="16" r="12" fill="#ececec" stroke="#b8b8b8" strokeWidth="1.6" />
    <circle cx="15" cy="16" r="9" fill="#f8f8f8" />
    <path d="M15 16V10M15 16l5 2M15 16l-6 2" stroke="#707070" strokeWidth="1" />
    <path d="M8 27l-2 2M22 27l2 2" stroke="#a0a0a0" strokeWidth="1.5" />
  </svg>
);
const CalendarIcon = ({ s = 32 }: IconProps) => (
  <svg width={s} height={s} viewBox="0 0 32 32">
    <defs>
      <Grad id="cal" a="#f0f0f0" b="#c8cccc" />
    </defs>
    <path d="M3 3h26v20l-7 8H3z" fill="url(#cal)" stroke="#c8c8c8" strokeWidth="0.5" />
    <path d="M29 23l-7 8c-1-3-1-6 0-8z" fill="#f4f4f4" stroke="#b8b8b8" strokeWidth="0.5" />
    <path d="M5 1v4M9 1v4M13 1v4M17 1v4M21 1v4M25 1v4" stroke="#787878" strokeWidth="1" />
    <text x="14" y="20" textAnchor="middle" fontFamily="DejaVu Sans" fontSize="13" fontWeight="700" fill="#444">16</text>
  </svg>
);
const StatsIcon = ({ s = 34 }: IconProps) => (
  <svg width={s} height={s} viewBox="0 0 34 34">
    <defs>
      <Grad id="s1" a="#5a5a5a" b="#c8c8c8" h />
      <Grad id="s2" a="#58b03c" b="#b4e498" h />
      <Grad id="s3" a="#1c70c8" b="#7cc4f4" h />
    </defs>
    <rect x="2" y="15" width="8" height="14" fill="url(#s1)" rx="1" />
    <rect x="11" y="11" width="8" height="20" fill="url(#s2)" rx="1" />
    <rect x="21" y="8" width="8" height="25" fill="url(#s3)" rx="1" />
    <path d="M3 13l9-7 7 4 9-8" stroke="#4a6ea0" strokeWidth="1.5" fill="none" />
    <path d="M25 1l6-1-1 6z" fill="#2f5ca8" />
  </svg>
);
const CloseX = ({ s = 16 }: IconProps) => (
  <svg width={s} height={s} viewBox="0 0 16 16">
    <path d="M3 2l10 12M13 2L3 14" stroke="#e01234" strokeWidth="2" fill="none" />
  </svg>
);
const ArrowBox = ({ s = 16 }: IconProps) => (
  <svg width={s} height={s} viewBox="0 0 16 16">
    <rect x="0.5" y="0.5" width="15" height="15" fill="#129a3c" stroke="#e8f4f0" />
    <path d="M3 6.5h5V3l5 5-5 5V9.5H3z" fill="#fff" />
  </svg>
);
const InfoManIcon = ({ s = 24 }: IconProps) => (
  <svg width={s} height={s} viewBox="0 0 24 24">
    <path d="M4 23c-1-7 1-12 5-12s6 3 7 8v4z" fill="#8ca4c8" />
    <ellipse cx="9" cy="7" rx="3.6" ry="5" fill="#a89878" />
    <path d="M5.5 6c0-5 7-6 7-1-2-.5-4 0-7 1z" fill="#545850" />
    <circle cx="16.5" cy="18" r="5" fill="#2f86cc" stroke="#d8ecf8" />
    <rect x="15.7" y="17" width="1.8" height="4" fill="#fff" />
    <rect x="15.7" y="14.6" width="1.8" height="1.5" fill="#fff" />
  </svg>
);
const Caret = ({ c = "#404040" }: { c?: string }) => (
  <svg width="8" height="5" viewBox="0 0 8 5">
    <path d="M0 0h8L4 5z" fill={c} />
  </svg>
);
const Chevron = ({ c = "#c0c0c0" }: { c?: string }) => (
  <svg width="9" height="6" viewBox="0 0 9 6">
    <path d="M1 1l3.5 3.5L8 1" stroke={c} strokeWidth="2" fill="none" />
  </svg>
);
const SmallDocIcon = ({ s = 17 }: IconProps) => (
  <svg width={s} height={s} viewBox="0 0 17 17">
    <path d="M6 1h7l3 3v12H6z" fill="#c4dcf4" stroke="#88a4cc" strokeWidth="0.7" />
    <path d="M1 8.5h6V5l5 4.5L7 14v-3H1z" fill="#20b020" stroke="#108010" strokeWidth="0.4" />
  </svg>
);
const Magnifier = ({ s = 18 }: IconProps) => (
  <svg width={s} height={s} viewBox="0 0 18 18">
    <circle cx="11" cy="7" r="5" fill="#f0f0e8" stroke="#9c9c88" strokeWidth="1.6" />
    <path d="M7 11l-5 5" stroke="#9c8870" strokeWidth="2.6" />
  </svg>
);
const DownBox = ({ s = 16 }: IconProps) => (
  <svg width={s} height={s} viewBox="0 0 16 16">
    <rect x="0.5" y="0.5" width="15" height="15" fill="#d8d8d0" stroke="#a0a090" />
    <path d="M5.5 2h5v6H13l-5 6-5-6h2.5z" fill="#505050" />
  </svg>
);
const GreyX = ({ s = 15 }: IconProps) => (
  <svg width={s} height={s} viewBox="0 0 15 15">
    <path d="M2 2l11 11M13 2L2 13" stroke="#707070" strokeWidth="2.6" />
  </svg>
);
const PenMark = ({ s = 18 }: IconProps) => (
  <svg width={s} height={s} viewBox="0 0 18 18">
    <path d="M14 2L4 14l-2 3 3-1L15 4z" fill="#8c8c84" />
    <path d="M3 16c4-2 8-2 12-2" stroke="#a8a8a0" strokeWidth="1" fill="none" />
  </svg>
);
const PeopleTiny = ({ s = 16 }: IconProps) => (
  <svg width={s} height={s} viewBox="0 0 16 16">
    <rect x="0.5" y="0.5" width="15" height="15" fill="#d4d0c8" stroke="#a8a4a0" />
    <circle cx="6" cy="5.5" r="2.4" fill="#8a6050" />
    <circle cx="11" cy="5" r="2.4" fill="#c89868" />
    <path d="M2 14c0-4 2-6 4-6s4 2 4 6z" fill="#4a6ca8" />
    <path d="M8 14c0-4 1-6 3-6s3 2 4 6z" fill="#3a98a0" />
  </svg>
);
const InvoiceIcon = ({ fill, id }: { fill: string; id: string }) => (
  <svg width="27" height="33" viewBox="0 0 27 33" aria-label={id}>
    <path d="M1 1h17l8 8v23H1z" fill={fill} stroke="#7a8ca0" />
    <path d="M18 1l8 8h-8z" fill="#e8f0f0" stroke="#7a8ca0" />
    <path d="M4 5h6M4 8h5M4 11h10M16 11h6" stroke="#6a7a8a" strokeWidth="1" />
    <rect x="4" y="15" width="19" height="9" fill="none" stroke="#7a8ca0" />
    <path d="M4 18h19M10 15v9M17 15v9" stroke="#7a8ca0" />
    <path d="M4 27h7M4 29.5h5" stroke="#7a8ca0" />
  </svg>
);
const ReceiptIcon = () => (
  <svg width="32" height="33" viewBox="0 0 32 33">
    <path d="M1 1h17l7 7v24H1z" fill="#d8d8d8" />
    <path d="M18 1l7 7h-7z" fill="#f4f4f4" />
    <path d="M3 6h8M3 10h15M3 13h17M3 16h15M3 19h12M3 22h12M3 25h10" stroke="#a0a0a0" strokeWidth="1" />
    <circle cx="23" cy="24" r="8.5" fill="#e8e8e8" stroke="#b0b0b0" />
    <circle cx="23" cy="24" r="6.5" fill="#3a9a3c" />
    <path d="M19.5 24l2.5 3 4.5-5.5" stroke="#fff" strokeWidth="2" fill="none" />
  </svg>
);
const CancelDoc = () => (
  <svg width="24" height="26" viewBox="0 0 24 26">
    <path d="M5 1h11l7 6v18H5z" fill="#f4f4f4" stroke="#d0d0d0" />
    <path d="M16 1l7 6h-7z" fill="#fafafa" stroke="#d0d0d0" />
    <path d="M1 15l10 10M11 15L1 25" stroke="#c83030" strokeWidth="1.6" />
  </svg>
);
const GreyDoc = () => (
  <svg width="24" height="26" viewBox="0 0 24 26">
    <path d="M1 1h16l6 6v18H1z" fill="#dfe2e4" />
    <path d="M17 1l6 6h-6z" fill="#f0f2f4" />
    <path d="M3 5h11M3 8h15M3 11h17M3 14h17M3 17h17M3 20h17" stroke="#c8cccc" strokeWidth="1" />
  </svg>
);
const EditDoc = () => (
  <svg width="24" height="26" viewBox="0 0 24 26">
    <path d="M3 1h13l6 6v18H3z" fill="#f0f0f0" stroke="#d0d0d0" />
    <path d="M5 6h8M5 9h12" stroke="#c0c0c0" />
    <path d="M17 9L6 21l-4 4 5-1 12-12z" fill="#d8a050" stroke="#885020" strokeWidth="0.5" />
  </svg>
);
const PrinterIcon = () => (
  <svg width="24" height="26" viewBox="0 0 24 26">
    <defs>
      <Grad id="pr" a="#f0f0f0" b="#808890" />
    </defs>
    <path d="M5 1h10l4 10H8z" fill="#bcd8f0" stroke="#7c98b8" strokeWidth="0.5" />
    <path d="M1 13c0-2 2-3 4-3h14c2 0 4 1 4 3v7H1z" fill="url(#pr)" stroke="#707880" strokeWidth="0.5" />
    <ellipse cx="12" cy="21" rx="11" ry="4" fill="#b0b4b8" stroke="#707880" strokeWidth="0.5" />
    <rect x="6" y="17" width="12" height="3" fill="#40484c" />
    <circle cx="19" cy="14" r="1" fill="#40b040" />
  </svg>
);
const TickIcon = () => (
  <svg width="24" height="20" viewBox="0 0 24 20">
    <path d="M1 11l4-3 4 5L20 1l3 2L10 19H7z" fill="#6cb43c" stroke="#4e9028" strokeWidth="0.5" />
  </svg>
);
const GearTiny = () => (
  <svg width="6" height="12" viewBox="0 0 6 12">
    <circle cx="0" cy="6" r="4.5" fill="#d0d0d0" stroke="#909090" />
  </svg>
);
const DotMarks = () => (
  <svg width="22" height="19" viewBox="0 0 22 19">
    <path d="M17 4h1M19 3h1M20 6h1M8 13h1M13 8h1" stroke="#c0c0c0" />
  </svg>
);
const LockIcon = () => (
  <svg width="12" height="16" viewBox="0 0 12 16">
    <path d="M3 7V4a3 3 0 0 1 6 0v3" stroke="#b8b8b8" strokeWidth="1.4" fill="none" />
    <rect x="1.5" y="7" width="9" height="8" fill="#ffcc40" stroke="#d8a020" strokeWidth="0.5" />
  </svg>
);
const AvatarIcon = () => (
  <svg width="32" height="22" viewBox="0 0 32 22">
    <rect x="0.5" y="0.5" width="31" height="21" fill="#fff" stroke="#303030" strokeDasharray="1 1" />
    <ellipse cx="16" cy="6" rx="3.5" ry="4.5" fill="#a89878" />
    <path d="M10 21c0-7 2-10 6-10s6 3 6 10z" fill="#8cb0d8" />
  </svg>
);
const MinGlyph = () => (
  <svg width="8" height="8" viewBox="0 0 8 8"><rect x="1" y="6" width="6" height="2" fill="#000" /></svg>
);
const RestoreGlyph = () => (
  <svg width="10" height="10" viewBox="0 0 10 10">
    <path d="M3 .5h6.5v6H3zM.5 3.5h6v6h-6z" fill="#d4d0c8" stroke="#000" />
    <path d="M3 1h7M0 4h7" stroke="#000" />
  </svg>
);
const CloseGlyph = () => (
  <svg width="9" height="9" viewBox="0 0 9 9"><path d="M1 1l7 7M8 1L1 8" stroke="#000" strokeWidth="1.6" /></svg>
);
const UpTri = () => (
  <svg width="8" height="5" viewBox="0 0 8 5"><path d="M0 5h8L4 0z" fill="#000" /></svg>
);
const RightTri = () => (
  <svg width="7" height="12" viewBox="0 0 7 12"><path d="M0 0l7 6-7 6z" fill="#000" /></svg>
);

/* ---------- data ---------- */
const MENU = ["Cari", "Kasa", "Çek", "Senet", "Personel", "Banka", "Stok", "Teklif", "Sipariş", "Ajanda", "Notlar", "İstatistikler", "Raporlar", "Ayarlar", "Program Bilgisi"];
const TOOLS: { label: string; icon: React.ReactNode; active?: boolean }[] = [
  { label: "Cari Hesaplar", icon: <PeopleIcon />, active: true },
  { label: "Kasa", icon: <CoinsIcon /> },
  { label: "Personel", icon: <ManIcon /> },
  { label: "Stok", icon: <BoxIcon /> },
  { label: "Satış Fişi", icon: <FolderDocIcon /> },
  { label: "Fatura Takibi", icon: <TabletIcon /> },
  { label: "Hatırlatmalar", icon: <TallFolderIcon /> },
  { label: "Raporlar", icon: <ChartSheetIcon /> },
  { label: "Kasa Fon", icon: <BagIcon /> },
];
const SIDE: { label: string; icon: React.ReactNode; active?: boolean }[] = [
  { label: "Çek", icon: <NoteIcon /> },
  { label: "Senet", icon: <PaperIcon /> },
  { label: "Banka", icon: <PieIcon /> },
  { label: "Teklif", icon: <PageIcon /> },
  { label: "Sipariş", icon: <OrderIcon /> },
  { label: "Hatırlatmalar", icon: <ClockIcon /> },
  { label: "Ajanda", icon: <CalendarIcon />, active: true },
  { label: "İstatistikler", icon: <StatsIcon /> },
];
const HEADS: { t: string; right?: boolean }[] = [
  { t: "" },
  { t: "Stok Kodu" },
  { t: "Stok Adı" },
  { t: "İsk.Tutarı", right: true },
  { t: "Miktarı", right: true },
  { t: "Birim Fiyatı", right: true },
  { t: "Tutarı", right: true },
  { t: "" },
];
const TOTALS = [
  ["Toplam:", "300,00"],
  ["İskonto Tutarı:", "0,00"],
  ["Ara Toplam:", "300,00"],
  ["Kdv Tutarı:", "54,00"],
  ["Genel Toplam:", "354,00"],
];
const STOCK: { l: string; w: number; v?: string; fill?: string; right?: boolean; indent?: number }[] = [
  { l: "Stok Kodu", w: 72 },
  { l: "Stok Adı", w: 145 },
  { l: "Birim", w: 241, v: "Adet" },
  { l: "Fiyatı", w: 64 },
  { l: "Tutarı", w: 62, fill: "#e0e0e0", right: true },
  { l: "İsk.%", w: 40, indent: 7 },
  { l: "İsk.Tutarı", w: 65, v: "0,00" },
];
const ROW_TONES = ["#eeeeee", "#ffffff", "#eeeeee", "#ffffff", "#eeeeee", "#ffffff", "#eeeeee"];

export default function App() {
  return (
    <Root>
      <Global />
      <TitleBar>
        <svg width="15" height="13" viewBox="0 0 15 13">
          <path d="M1 6l6-5 7 5-6 6z" fill="#f4d890" stroke="#fff" strokeWidth="0.6" />
        </svg>
        <TitleText>Ön Muhasebe Pro - Demo Sürüm</TitleText>
        <WinButton><MinGlyph /></WinButton>
        <WinButton><RestoreGlyph /></WinButton>
        <WinButton><CloseGlyph /></WinButton>
      </TitleBar>
      <MenuBar>
        {MENU.map((m) => (
          <span key={m}>{m}</span>
        ))}
      </MenuBar>
      <Header>
        <Brand>ABC Ticaret - 2016</Brand>
        <Company>ABC Ticaret Ltd. Şti.</Company>
      </Header>
      <TopTools>
        {TOOLS.map((t) => (
          <ToolButton key={t.label} $active={t.active}>
            <ToolIcon>{t.icon}</ToolIcon>
            {t.label}
          </ToolButton>
        ))}
      </TopTools>
      <Workspace>
        <Sidebar>
          {SIDE.map((t) => (
            <SideButton key={t.label} $active={t.active}>
              <ToolIcon>{t.icon}</ToolIcon>
              {t.label}
            </SideButton>
          ))}
        </Sidebar>
        <Stage>
          <Welcome>HOŞGELDİNİZ</Welcome>
        </Stage>
      </Workspace>
      <StatusBar>
        <StatusAvatar><AvatarIcon /></StatusAvatar>
        <StatusUser>Yönetici - Uygulama Yöneticisi</StatusUser>
        <StatusActions>
          <StatusAction><LockIcon />Ekranı Kilitle</StatusAction>
          <StatusAction><CloseX s={15} />Programı Kapat</StatusAction>
        </StatusActions>
      </StatusBar>
      <Footer />

      <BackWindow>
        <BackTitle>
          <BackTitleCell $w={472}>Cari Hesap Arama</BackTitleCell>
          <BackTitleCell>Cari Hesap Bilgileri</BackTitleCell>
          <CloseButton $w={55} $h={25}><CloseX /></CloseButton>
        </BackTitle>
        <BackBody>
          <Pane>
            <SearchFrame>
              <SearchLabel>Aranan Alan</SearchLabel>
              <SearchField>Ünvanı</SearchField>
              <SearchList>
                <SearchHead>Ünvanı</SearchHead>
                <SearchRow>ABC TİCARET A.Ş.</SearchRow>
              </SearchList>
            </SearchFrame>
            <HistoryBand>Cari Hesap Hareketleri</HistoryBand>
            <HistoryHead>Tarih</HistoryHead>
            <HistoryRow>
              <RowMark><RightTri /></RowMark>
              <BlackCell>19.09.2016</BlackCell>
            </HistoryRow>
          </Pane>
          <Pane>
            <PrintLink><GearTiny />Yazdır</PrintLink>
            <CancelButton>azgeç</CancelButton>
            <PhotoTab>Fotoğraf</PhotoTab>
            <PhotoPanel>
              <PhotoRow /><PhotoRow /><PhotoRow /><PhotoRow /><PhotoRow />
            </PhotoPanel>
            <CollectArea>
              <CollectButton>HSİLAT</CollectButton>
            </CollectArea>
            <StatementButton>Hesap Ekstre</StatementButton>
            <GridWrap>
              <AmountCol>
                <AmountHead>İşlem Tutarı</AmountHead>
                <AmountCell>354,00 TL</AmountCell>
              </AmountCol>
              <ScrollBar>
                <ScrollBtn><UpTri /></ScrollBtn>
                <ScrollBtn $grow />
                <ScrollTrack />
                <ScrollBtn><Caret c="#000" /></ScrollBtn>
              </ScrollBar>
            </GridWrap>
          </Pane>
        </BackBody>
        <BackBand>CARİ HESAP DURUMU</BackBand>
        <BackFoot>
          <Owed>354,00 (B)</Owed>
          <span>CARİ HESAP 354,00 TL BORÇLUDUR.</span>
        </BackFoot>
      </BackWindow>

      <SaleDialog>
        <DialogTitle $h={25}>
          <ArrowBox />
          SATIŞ İŞLEMİ
          <CloseButton $w={57} $h={24}><CloseX /></CloseButton>
        </DialogTitle>
        <InfoBlock>
          <CondLabel>Cari Kodu:</CondLabel>
          <BlueValue>C00004</BlueValue>
          <CondLabel>Ünvanı:</CondLabel>
          <BlueValue>ABC TİCARET A.Ş.</BlueValue>
          <CondLabel>Yetkili Kişi:</CondLabel>
          <span />
          <InfoIcon><InfoManIcon /></InfoIcon>
        </InfoBlock>
        <FormArea>
          <FormFields>
            <FormRow $h={24}>
              <FormLabel>İşlem Tarihi:</FormLabel>
              <DateBox $w={128}>19.09.2016 04:08<SpinBtn><Caret c="#808080" /></SpinBtn></DateBox>
            </FormRow>
            <FormRow $h={23}>
              <FormLabel>Ödeme Şekli:</FormLabel>
              <ComboBox $w={128}>Açık Hesap<ComboArrow><Chevron /></ComboArrow></ComboBox>
            </FormRow>
            <FormRow $h={24}>
              <FormLabel>Belge No:</FormLabel>
              <TextBox $w={98} $h={21} $shift={-1} />
              <TextBox $w={24} $h={21} $shift={1}><DotMarks /></TextBox>
            </FormRow>
            <FormRow $h={44}>
              <FormLabel>Açıklama:</FormLabel>
              <TextBox $w={440} $h={44} $shift={-1} />
            </FormRow>
          </FormFields>
          <TabsArea>
            <TabStrip>
              <Tab $active>Fatura Bilgileri</Tab>
              <Tab>İrsaliye Bilgileri</Tab>
            </TabStrip>
            <TabPanel>
              <CheckCol>
                <CheckBox />
                <CheckLabel>Fatura<br />Kesildi</CheckLabel>
              </CheckCol>
              <InvoiceFields>
                <MutedLabel>Fatura No:</MutedLabel>
                <TextBox $w={107} $h={21} />
                <MutedLabel>Fatura Tarihi:</MutedLabel>
                <DateBox $w={104}>
                  <PlainDate>19.09.2016</PlainDate>
                  <SpinBtn><Caret c="#808080" /></SpinBtn>
                </DateBox>
                <MutedLabel>Fatura Tipi:</MutedLabel>
                <ComboBox $w={105}>Kapalı<ComboArrow><Chevron /></ComboArrow></ComboBox>
              </InvoiceFields>
            </TabPanel>
          </TabsArea>
        </FormArea>
        <StockGroup>
          <Legend>Stok Seçimi</Legend>
          <ActionButton $w={56} $h={33}><Magnifier />Bul</ActionButton>
          <StockFields>
            {STOCK.map((f) => (
              <StockField key={f.l} $w={f.w}>
                <StockLabel $right={f.right} $indent={f.indent}>{f.l}</StockLabel>
                <StockInput $fill={f.fill}>{f.v}</StockInput>
              </StockField>
            ))}
          </StockFields>
          <EkleButton $w={58} $h={33}>Ekle <DownBox /></EkleButton>
        </StockGroup>
        <LineGrid>
          <GridHead>
            {HEADS.map((h, i) => (
              <HeadCell key={i} $right={h.right} $first={i === 0}>{h.t}</HeadCell>
            ))}
          </GridHead>
          <GridRow $tone="#d4d0c8">
            <RowIconCell><SmallDocIcon /></RowIconCell>
            <GridCell>S00002</GridCell>
            <GridCell>A ÜRÜNÜ</GridCell>
            <GridCell $right>0,00</GridCell>
            <GridCell $right>2</GridCell>
            <GridCell $right>150,00</GridCell>
            <GridCell $right>300,00</GridCell>
            <GridCell $fill="#fff" />
          </GridRow>
          {ROW_TONES.map((tone, i) => (
            <GridRow key={i} $tone={tone}>
              {Array.from({ length: 8 }).map((_, c) => (
                <GridCell key={c} />
              ))}
            </GridRow>
          ))}
        </LineGrid>
        <Lower>
          <LowerLeft>
            <ButtonRow>
              <ActionButton $w={104} $h={33}><GreyX />&nbsp;Seçileni Sil</ActionButton>
              <ActionButton $w={104} $h={33}><PenMark />Düzenle</ActionButton>
            </ButtonRow>
            <CariInfo><PeopleTiny />Faturada Kullanılan Cari Bilgileri</CariInfo>
          </LowerLeft>
          <Totals>
            {TOTALS.map(([l, v]) => (
              <React.Fragment key={l}>
                <TotalLabel>{l}</TotalLabel>
                <TotalValue>{v}</TotalValue>
                <TotalUnit>TL</TotalUnit>
              </React.Fragment>
            ))}
          </Totals>
        </Lower>
        <BottomBand>
          <BandButton><CancelDoc />İPTAL ET</BandButton>
          <BandButton $gapLeft={80}><GreyDoc /><RedText>YENİ İŞLEM</RedText></BandButton>
          <BandButton><EditDoc />DÜZENLE</BandButton>
          <BandButton $active><PrinterIcon />YAZDIR</BandButton>
          <BandButton><TickIcon />TAMAM</BandButton>
        </BottomBand>
      </SaleDialog>

      <PrintDialog>
        <DialogTitle $h={26} $pad={2}>
          <ArrowBox />
          YAZDIR
          <CloseButton $w={56} $h={25}><CloseX /></CloseButton>
        </DialogTitle>
        <PrintBody>
          <LocationGroup>
            <LocationLegend>Yazdırma Konumu</LocationLegend>
            <LocationCombo>Önizleme<LocationArrow><Chevron c="#4a5c88" /></LocationArrow></LocationCombo>
          </LocationGroup>
          <PrintButton $active>
            <InvoiceIcon fill="#c4f4f8" id="fatura" />
            FATURA YAZDIR
          </PrintButton>
          <PrintButton>
            <InvoiceIcon fill="#f8f4a4" id="irsaliye" />
            İRSALİYE YAZDIR
          </PrintButton>
          <PrintButton>
            <ReceiptIcon />
            MAKBUZ YAZDIR
          </PrintButton>
        </PrintBody>
      </PrintDialog>
    </Root>
  );
}
